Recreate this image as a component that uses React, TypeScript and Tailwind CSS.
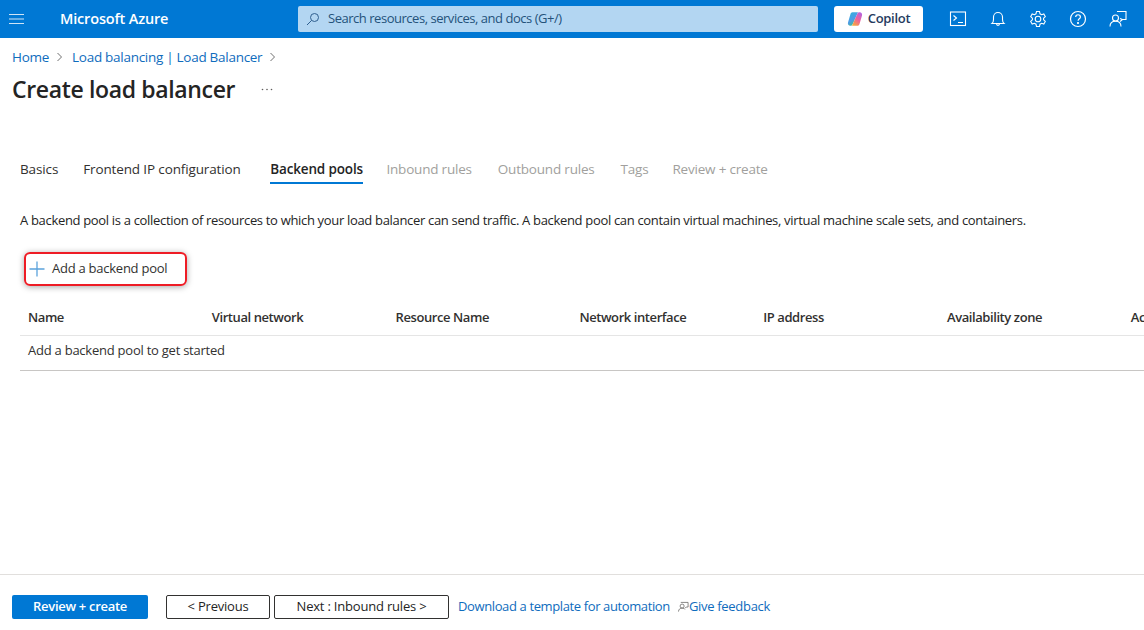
import React from "react";

function Tab({ label, active, disabled, className }: { label: string; active?: boolean; disabled?: boolean; className?: string }) {
  return (
    <div className={`relative h-[30px] flex items-center shrink-0 ${className ?? ""} ${active ? "font-semibold text-[#242424] tracking-[-0.15px]" : disabled ? "text-[#a19f9d] tracking-[-0.2px]" : "text-[#323130] tracking-[-0.13px]"}`}>
      {label}
      {active && <span className="absolute left-0 right-0 bottom-0 h-[2px] bg-[#0078d4]" />}
    </div>
  );
}

const cols = ["Name", "Virtual network", "Resource Name", "Network interface", "IP address", "Availability zone", "Actions"];

export default function App() {
  return (
    <div className="w-[1144px] h-[630px] overflow-hidden bg-white flex flex-col font-['Open_Sans','Noto_Sans',sans-serif] text-[13px] tracking-[-0.3px] text-[#323130]">
      <header className="h-[38px] shrink-0 bg-[#0078d4] flex items-center text-white">
        <div className="w-[60px] pl-[9px] shrink-0">
          <svg width="15" height="12" viewBox="0 0 15 12" fill="none" stroke="#cfe4f6" strokeWidth="1.2"><path d="M0 1.500h15M0 6h15M0 10.500h15" /></svg>
        </div>
        <div className="w-[238px] shrink-0 text-[14.500px] font-semibold tracking-[-0.16px]">Microsoft Azure</div>
        <div className="w-[520px] h-[26px] shrink-0 bg-[#b3d6f2] rounded-[2px] flex items-center pl-[8px]">
          <svg width="14" height="14" viewBox="0 0 14 14" fill="none" stroke="#2f5f8f" strokeWidth="1"><circle cx="8.500" cy="5.500" r="4" /><path d="M5.500 8.500L1 13" /></svg>
          <span className="ml-[8px] text-[#24527a] tracking-[-0.47px]">Search resources, services, and docs (G+/)</span>
        </div>
        <div className="ml-[16px] w-[89px] h-[26px] shrink-0 bg-white rounded-[3px] flex items-center justify-center gap-[5px] text-[#243a5e] font-semibold">
          <svg width="16" height="16" viewBox="0 0 16 16">
            <defs>
              <linearGradient id="cpa" x1="0" y1="0" x2="0.6" y2="1"><stop offset="0" stopColor="#2fb4d8" /><stop offset="0.6" stopColor="#4f9be8" /><stop offset="1" stopColor="#3fc47a" /></linearGradient>
              <linearGradient id="cpb" x1="0.8" y1="0" x2="0.2" y2="1"><stop offset="0" stopColor="#b464e0" /><stop offset="0.5" stopColor="#f0609a" /><stop offset="1" stopColor="#f6a93b" /></linearGradient>
            </defs>
            <path d="M5.500 1.200h5.500L8 8l-2.500 5.500c-.3.9-1.200 1.300-2 1.300C1.500 14.800.5 13 1 11.500L3.500 3c.3-1 1-1.800 2-1.800z" fill="url(#cpa)" />
            <path d="M10.500 14.800H5l3-6.800 2.500-5.500c.3-.9 1.200-1.300 2-1.300 2 0 3 1.800 2.500 3.300L12.500 13c-.3 1-1 1.800-2 1.800z" fill="url(#cpb)" />
          </svg>
          <span>Copilot</span>
        </div>
        <div className="flex items-center ml-[25px] gap-[20px]">
          <svg width="20" height="20" viewBox="0 0 20 20" fill="none" stroke="white" strokeWidth="1.100"><rect x="2.500" y="3" width="15" height="13.500" /><path d="M5.500 6.500l3 2.500-3 2.500M10 13.500h5" /></svg>
          <svg width="20" height="20" viewBox="0 0 20 20" fill="none" stroke="white" strokeWidth="1.100"><path d="M4 14.500c1.200-1 1.500-2 1.500-4V8a4.500 4.500 0 0 1 9 0v2.500c0 2 .3 3 1.500 4z" /><path d="M8.500 14.500c0 2.500 3 2.500 3 0" /></svg>
          <svg width="20" height="20" viewBox="0 0 20 20" fill="none" stroke="white" strokeWidth="1.100"><circle cx="10" cy="10" r="2.800" /><path d="M8.500 2.500h3l.5 2.300 1.600.9 2.200-.7 1.500 2.600-1.700 1.600v1.600l1.700 1.600-1.500 2.600-2.200-.7-1.600.9-.5 2.300h-3l-.5-2.300-1.600-.9-2.200.7-1.500-2.600 1.700-1.600V9.200L2.700 7.600l1.500-2.600 2.200.7L8 4.800z" /></svg>
          <svg width="20" height="20" viewBox="0 0 20 20" fill="none" stroke="white" strokeWidth="1.200"><circle cx="10" cy="10" r="7.500" /><path d="M7.700 8c0-3 4.700-3 4.700 0 0 1.800-2.300 1.800-2.300 3.800" /><circle cx="10" cy="14" r=".5" fill="white" /></svg>
          <svg width="20" height="20" viewBox="0 0 20 20" fill="none" stroke="white" strokeWidth="1.100"><path d="M9 2.500h9v8h-3.500l-2.500 2M12 9.500l2.500 1" /><circle cx="7.500" cy="9" r="3" /><path d="M2 17.500c0-3.500 2.300-5.300 5.500-5.300s5.500 1.800 5.500 5.300" /></svg>
        </div>
      </header>

      <main className="flex-1 min-h-0 flex flex-col">
        <nav className="mt-[10px] h-[18px] pl-[12px] flex items-center text-[#0f6cbd] text-[13.500px] tracking-[-0.28px]">
          <span>Home</span>
          <svg className="ml-[7px] mr-[8px]" width="8" height="10" viewBox="0 0 8 10" fill="none" stroke="#707070"><path d="M1.500 1l4 4-4 4" /></svg>
          <span>Load balancing | Load Balancer</span>
          <svg className="ml-[7px]" width="8" height="10" viewBox="0 0 8 10" fill="none" stroke="#707070"><path d="M1.500 1l4 4-4 4" /></svg>
        </nav>
        <div className="mt-[6px] h-[34px] pl-[12px] flex items-center">
          <h1 className="text-[23px] font-semibold text-[#242424] tracking-[-0.35px]">Create load balancer</h1>
          <svg className="ml-[26px]" width="12" height="3" viewBox="0 0 12 3" fill="#605e5c"><circle cx="1.500" cy="1.500" r=".8" /><circle cx="6" cy="1.500" r=".8" /><circle cx="10.500" cy="1.500" r=".8" /></svg>
        </div>

        <div className="mt-[48px] pl-[20px] flex text-[13.500px]">
          <Tab label="Basics" className="mr-[25px]" />
          <Tab label="Frontend IP configuration" className="mr-[29.500px]" />
          <Tab label="Backend pools" active className="mr-[23.500px]" />
          <Tab label="Inbound rules" disabled className="mr-[26px]" />
          <Tab label="Outbound rules" disabled className="mr-[26px]" />
          <Tab label="Tags" disabled className="mr-[24px]" />
          <Tab label="Review + create" disabled />
        </div>

        <p className="mt-[28px] pl-[20px] h-[18px] flex items-center whitespace-nowrap text-[#242424] tracking-[-0.322px]">
          A backend pool is a collection of resources to which your load balancer can send traffic. A backend pool can contain virtual machines, virtual machine scale sets, and containers.
        </p>

        <div className="mt-[22px] ml-[24px] w-[163px] h-[34px] rounded-[6px] border-2 border-[#ee1c25] shadow-[0_1px_6px_rgba(0,0,0,0.35)] flex items-center pl-[3px] text-[#323130] tracking-[-0.25px]">
          <svg width="16" height="16" viewBox="0 0 16 16" fill="none" stroke="#5ba3dc" strokeWidth="1.300"><path d="M8 .5v15M.5 8h15" /></svg>
          <span className="ml-[7px]">Add a backend pool</span>
        </div>

        <div className="mt-[15px] ml-[20px] w-[1124px] overflow-hidden">
          <div className="h-[35px] border-b border-[#e5e5e5] flex items-center pl-[8px] font-semibold text-[#323130] tracking-[-0.42px]">
            {cols.map((c) => (
              <div key={c} className="w-[183.800px] shrink-0 whitespace-nowrap">{c}</div>
            ))}
          </div>
          <div className="h-[35px] pb-[5px] border-b border-[#c8c6c4] flex items-center pl-[8px] tracking-[-0.24px]">Add a backend pool to get started</div>
        </div>
      </main>

      <footer className="h-[56px] shrink-0 border-t border-[#e1dfdd] flex items-center pl-[12px] pt-[9px]">
        <button className="w-[136px] h-[24px] bg-[#0078d4] rounded-[2px] text-white font-semibold">Review + create</button>
        <button className="ml-[18px] w-[104px] h-[24px] border border-[#323130] rounded-[2px] font-medium text-[#242424] tracking-[-0.2px]">&lt; Previous</button>
        <button className="ml-[4px] w-[175px] h-[24px] border border-[#323130] rounded-[2px] font-medium text-[#242424] tracking-[-0.2px]">Next : Inbound rules &gt;</button>
        <span className="ml-[9px] text-[#0f6cbd] tracking-[-0.38px]">Download a template for automation</span>
        <svg className="ml-[8px]" width="11" height="12" viewBox="0 0 12 12" fill="none" stroke="#605e5c" strokeWidth=".8"><path d="M3 1h8v5H9L7.500 7.500" /><circle cx="4.500" cy="5" r="2.200" /><path d="M.5 11c.3-2.800 2-3.800 4-3.800 1.500 0 2.500.5 3 1.500" /></svg>
        <span className="text-[#0f6cbd] tracking-[-0.3px]">Give feedback</span>
      </footer>
    </div>
  );
}
